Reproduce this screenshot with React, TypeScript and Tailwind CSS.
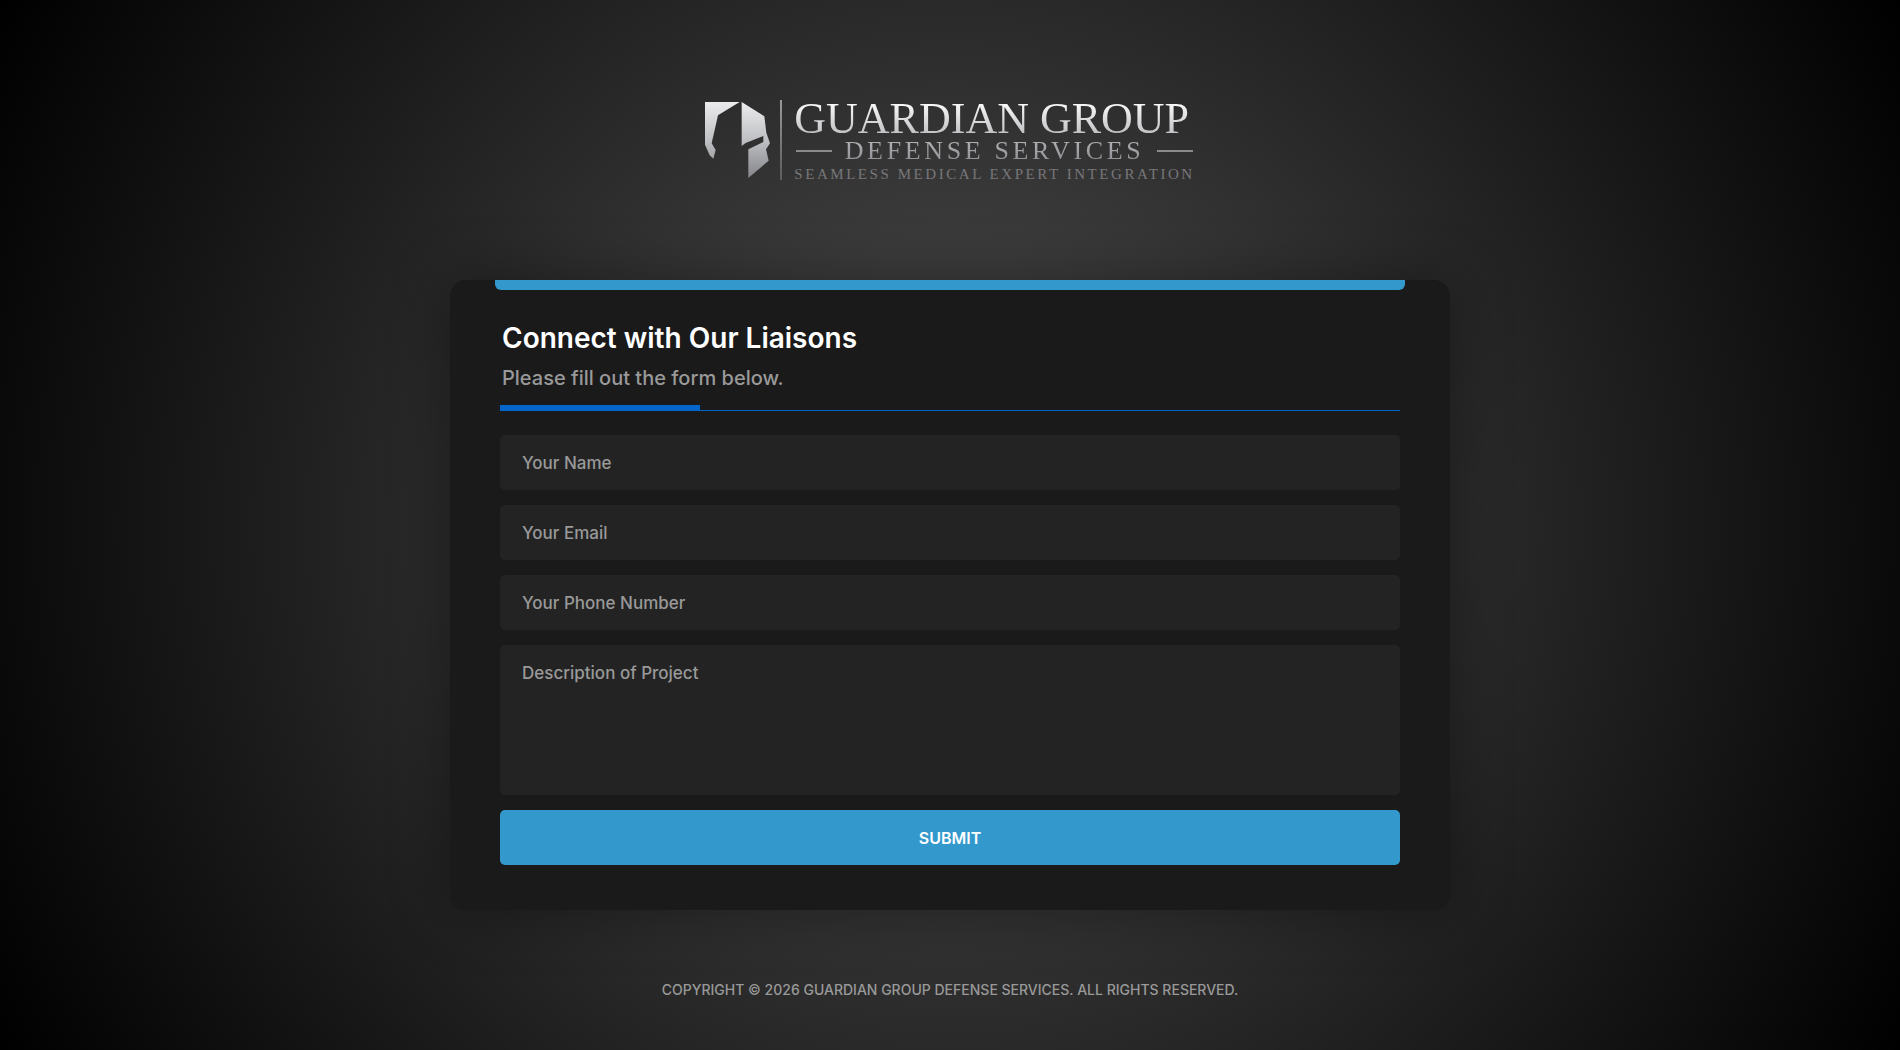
import React from "react";

const fieldClass =
  "block w-full rounded-[5px] bg-[#232323] px-[22px] text-[17px] font-medium text-white placeholder:text-[#999] placeholder:opacity-100 outline-none focus:ring-1 focus:ring-[#3399cc]";

const fields = [
  { id: "name", label: "Your Name", type: "text" },
  { id: "email", label: "Your Email", type: "email" },
  { id: "phone", label: "Your Phone Number", type: "tel" },
];

function Logo() {
  return (
    <a href="#" className="flex items-start">
      <svg viewBox="51 66 195 228" className="mt-0.5 h-[76px] w-[65px]" aria-hidden="true">
        <defs>
          <linearGradient id="steel" x1="0" y1="66" x2="0" y2="294" gradientUnits="userSpaceOnUse">
            <stop offset="0" stopColor="#ececee" />
            <stop offset="0.5" stopColor="#bfc0c3" />
            <stop offset="1" stopColor="#85868a" />
          </linearGradient>
        </defs>
        <g fill="url(#steel)">
          <path d="M51 66H155L90 106L71 190L83 210L76 236L65 226L51 194Z" />
          <path d="M161 66L229 109L235 158L246 190L234 208L242 242L181 294V208L226 186V168L173 189L161 198Z" />
        </g>
      </svg>
      <span className="mr-3 ml-2.5 h-20 w-0.5 bg-linear-to-b from-[#9a9a9c] to-[#5c5c5e]" />
      <span className="flex flex-col font-['Liberation_Serif',serif] whitespace-nowrap">
        <span className="bg-linear-to-b from-white to-[#b9babd] bg-clip-text text-[44px] leading-[38px] text-transparent">
          GUARDIAN GROUP
        </span>
        <span className="flex items-center justify-between px-0.5 text-[26px] leading-[26px]">
          <span className="h-0.5 w-9 bg-[#8a8b8d]" />
          <span className="bg-linear-to-b from-[#b4b5b8] to-[#8b8c90] bg-clip-text tracking-[0.14em] text-transparent">
            DEFENSE SERVICES
          </span>
          <span className="h-0.5 w-9 bg-[#8a8b8d]" />
        </span>
        <span className="text-[15px] leading-5 tracking-[0.17em] text-[#77777a]">
          SEAMLESS MEDICAL EXPERT INTEGRATION
        </span>
      </span>
    </a>
  );
}

export default function App() {
  return (
    <div className="flex min-h-screen flex-col items-center bg-[radial-gradient(circle_at_center,#505050_0%,#000_100%)] px-6 pt-[100px] pb-12 font-[Inter,sans-serif]">
      <header>
        <Logo />
      </header>

      <main className="mt-24 w-full max-w-[1000px] rounded-2xl bg-[#1a1a1a] px-[50px] pb-[45px] shadow-[0_0_60px_rgba(0,0,0,0.4)]">
        <div className="-mx-[5px] h-2.5 rounded-b-md bg-[#3399cc]" />
        <h1 className="mt-[30px] ml-0.5 text-[28px] leading-9 font-semibold text-white">
          Connect with Our Liaisons
        </h1>
        <p className="mt-2 ml-0.5 text-xl leading-7 font-medium text-[#999]">
          Please fill out the form below.
        </p>
        <div className="mt-[13px] border-b border-[#0066cc]">
          <div className="h-[5px] w-[200px] bg-[#0066cc]" />
        </div>

        <form className="mt-6 flex flex-col gap-[15px]" onSubmit={(e) => e.preventDefault()}>
          {fields.map((f) => (
            <input
              key={f.id}
              id={f.id}
              name={f.id}
              type={f.type}
              aria-label={f.label}
              placeholder={f.label}
              className={`${fieldClass} h-[55px]`}
            />
          ))}
          <textarea
            id="description"
            name="description"
            aria-label="Description of Project"
            placeholder="Description of Project"
            className={`${fieldClass} h-[150px] resize-none py-4 leading-6`}
          />
          <button
            type="submit"
            className="h-[55px] w-full cursor-pointer rounded-[5px] bg-[#3399cc] text-base font-semibold text-white"
          >
            SUBMIT
          </button>
        </form>
      </main>

      <footer className="mt-[70px] text-center text-sm leading-5 font-medium text-[#999]">
        COPYRIGHT © 2026 GUARDIAN GROUP DEFENSE SERVICES. ALL RIGHTS RESERVED.
      </footer>
    </div>
  );
}
